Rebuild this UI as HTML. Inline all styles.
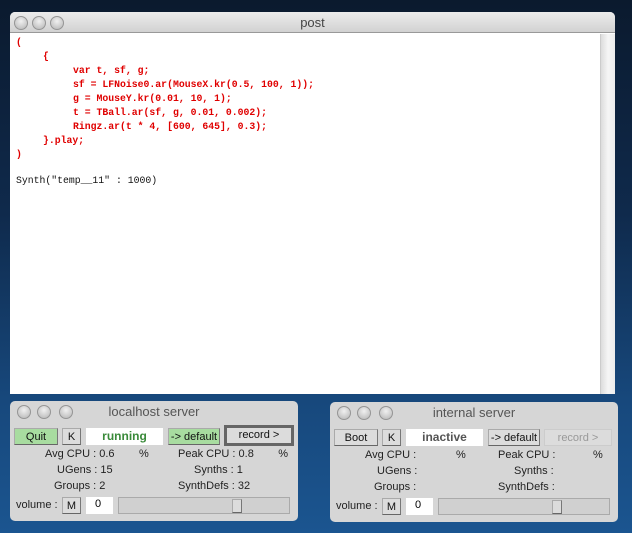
<!DOCTYPE html>
<html><head><style>
*{margin:0;padding:0;box-sizing:border-box}
body{width:632px;height:533px;overflow:hidden;position:relative;font-family:"Liberation Sans",sans-serif;
background:linear-gradient(180deg,#0b1a2e 0%,#0f2a4c 40%,#17487c 75%,#1b5590 100%)}
.a{position:absolute}
.win{position:absolute;background:#fff;border-radius:5px 5px 0 0;overflow:hidden}
.tb{position:absolute;left:0;top:0;right:0;height:21px;background:linear-gradient(#ececec,#d2d2d2);border-bottom:1px solid #999;text-align:center;font-size:13px;color:#444;line-height:21px}
.dot{position:absolute;top:4px;width:14px;height:14px;border-radius:50%;background:radial-gradient(circle at 50% 35%,#f0f0f0,#b4b4b4);border:1px solid #959595}
.code{position:absolute;font-family:"Liberation Mono",monospace;font-weight:bold;font-size:9.8px;color:#e00000;white-space:pre;line-height:14px}
.panel{position:absolute;width:288px;height:120px;background:#d6d6d6;border-radius:5px;overflow:hidden}
.ptb{position:absolute;left:0;top:0;right:0;height:21px;text-align:center;font-size:13px;color:#555;line-height:21px}
.btn{position:absolute;height:17px;font-size:11px;text-align:center;line-height:16px;background:#dcdcdc;border:1px solid #aaa;border-right-color:#777;border-bottom-color:#666;color:#111}
.g{background:#a8dca0}
.lbl{position:absolute;font-size:11px;color:#222;white-space:pre}
.fld{position:absolute;background:#fff;height:17px;font-size:11px}
</style></head><body>
<div class="win" style="left:10px;top:12px;width:605px;height:382px">
 <div class="tb">post</div>
 <div class="dot" style="left:4px"></div><div class="dot" style="left:22px"></div><div class="dot" style="left:40px"></div>
 <div class="a" style="left:590px;top:22px;width:15px;height:360px;background:linear-gradient(90deg,#dcdcdc,#f6f6f6,#ececec);border-left:1px solid #ccc"></div>
</div>
<div class="code" style="left:16px;top:36px">(</div>
<div class="code" style="left:43px;top:50px">{</div>
<div class="code" style="left:73px;top:64px">var t, sf, g;
sf = LFNoise0.ar(MouseX.kr(0.5, 100, 1));
g = MouseY.kr(0.01, 10, 1);
t = TBall.ar(sf, g, 0.01, 0.002);
Ringz.ar(t * 4, [600, 645], 0.3);</div>
<div class="code" style="left:43px;top:134px">}.play;</div>
<div class="code" style="left:16px;top:148px">)</div>
<div class="code" style="left:16px;top:174px;color:#111;font-weight:normal">Synth("temp__11" : 1000)</div>

<div class="panel" style="left:10px;top:401px">
 <div class="ptb">localhost server</div>
 <div class="dot" style="left:7px"></div><div class="dot" style="left:27px"></div><div class="dot" style="left:49px"></div>
 <div class="btn g" style="left:4px;top:27px;width:44px">Quit</div>
 <div class="btn" style="left:52px;top:27px;width:19px">K</div>
 <div class="fld" style="left:76px;top:27px;width:77px;text-align:center;color:#3a8a3a;font-weight:bold;font-size:12px;line-height:17px">running</div>
 <div class="btn g" style="left:158px;top:27px;width:52px">-&gt; default</div>
 <div class="btn" style="left:214px;top:24px;width:70px;height:21px;border:3px solid #666;line-height:15px">record &gt;</div>
 <div class="lbl" style="left:35px;top:47px">Avg CPU : 0.6        %</div>
 <div class="lbl" style="left:168px;top:47px">Peak CPU : 0.8        %</div>
 <div class="lbl" style="left:47px;top:63px">UGens : 15</div>
 <div class="lbl" style="left:184px;top:63px">Synths : 1</div>
 <div class="lbl" style="left:44px;top:79px">Groups : 2</div>
 <div class="lbl" style="left:168px;top:79px">SynthDefs : 32</div>
 <div class="lbl" style="left:6px;top:98px">volume :</div>
 <div class="btn" style="left:52px;top:96px;width:19px">M</div>
 <div class="fld" style="left:76px;top:96px;width:27px;padding-left:9px;line-height:14px">0</div>
 <div class="a" style="left:108px;top:96px;width:172px;height:17px;background:#d0d0d0;border:1px solid #aaa"></div>
 <div class="btn" style="left:222px;top:98px;width:10px;height:14px"></div>
</div>

<div class="panel" style="left:330px;top:402px">
 <div class="ptb">internal server</div>
 <div class="dot" style="left:7px"></div><div class="dot" style="left:27px"></div><div class="dot" style="left:49px"></div>
 <div class="btn" style="left:4px;top:27px;width:44px">Boot</div>
 <div class="btn" style="left:52px;top:27px;width:19px">K</div>
 <div class="fld" style="left:76px;top:27px;width:77px;text-align:center;color:#555;font-weight:bold;font-size:12px;line-height:17px">inactive</div>
 <div class="btn" style="left:158px;top:27px;width:52px">-&gt; default</div>
 <div class="btn" style="left:214px;top:27px;width:68px;color:#999;border-color:#ccc">record &gt;</div>
 <div class="lbl" style="left:35px;top:47px">Avg CPU :</div>
 <div class="lbl" style="left:126px;top:47px">%</div>
 <div class="lbl" style="left:168px;top:47px">Peak CPU :</div>
 <div class="lbl" style="left:263px;top:47px">%</div>
 <div class="lbl" style="left:47px;top:63px">UGens :</div>
 <div class="lbl" style="left:184px;top:63px">Synths :</div>
 <div class="lbl" style="left:44px;top:79px">Groups :</div>
 <div class="lbl" style="left:168px;top:79px">SynthDefs :</div>
 <div class="lbl" style="left:6px;top:98px">volume :</div>
 <div class="btn" style="left:52px;top:96px;width:19px">M</div>
 <div class="fld" style="left:76px;top:96px;width:27px;padding-left:9px;line-height:14px">0</div>
 <div class="a" style="left:108px;top:96px;width:172px;height:17px;background:#d0d0d0;border:1px solid #aaa"></div>
 <div class="btn" style="left:222px;top:98px;width:10px;height:14px"></div>
</div>
</body></html>
